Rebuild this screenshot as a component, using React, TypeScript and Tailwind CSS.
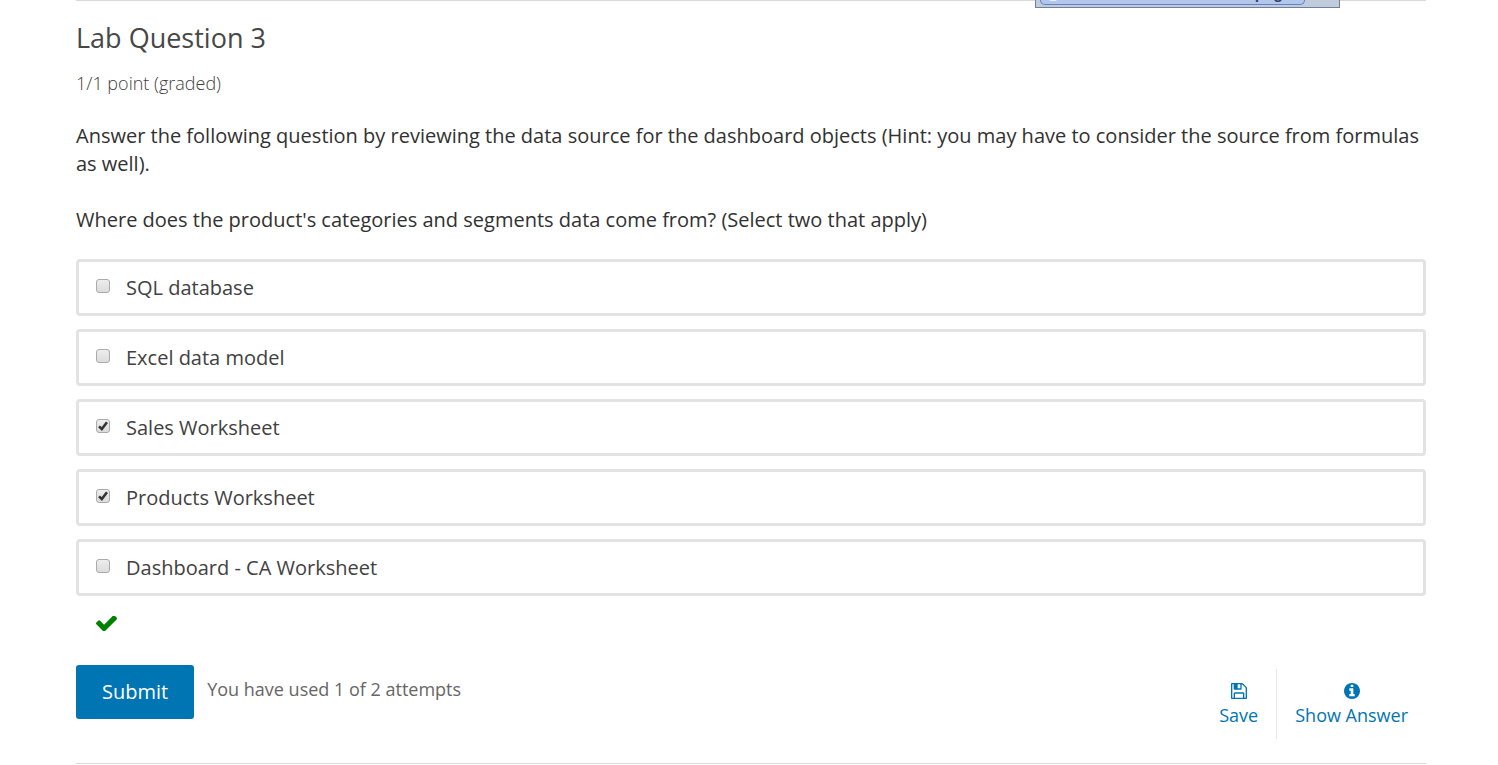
import { useState } from "react";

const choices = [
  { id: "sql", label: "SQL database", selected: false },
  { id: "model", label: "Excel data model", selected: false },
  { id: "sales", label: "Sales Worksheet", selected: true },
  { id: "products", label: "Products Worksheet", selected: true },
  { id: "dashboard", label: "Dashboard - CA Worksheet", selected: false },
];

function CheckIcon({ className }: { className: string }) {
  return (
    <svg viewBox="121 378 1550 1144" className={className} fill="currentColor" aria-hidden="true">
      <path d="M1671 566q0 40-28 68l-724 724-136 136q-28 28-68 28t-68-28l-136-136-362-362q-28-28-28-68t28-68l136-136q28-28 68-28t68 28l294 295 656-657q28-28 68-28t68 28l136 136q28 28 28 68z" />
    </svg>
  );
}

function TickIcon({ className }: { className: string }) {
  return (
    <svg viewBox="0 0 10 10" className={className} fill="none" stroke="currentColor" strokeWidth="2.6" aria-hidden="true">
      <path d="M1 5.4 3.8 8 9 1.2" />
    </svg>
  );
}

function SaveIcon() {
  return (
    <svg viewBox="0 128 1536 1536" className="size-4" fill="currentColor" aria-hidden="true">
      <path d="M384 1536h768v-384H384v384zm896 0h128V640q0-14-10-38.5t-20-34.5l-281-281q-10-10-34-20t-39-10v416q0 40-28 68t-68 28H352q-40 0-68-28t-28-68V256H128v1280h128v-416q0-40 28-68t68-28h832q40 0 68 28t28 68v416zM896 608V288q0-13-9.5-22.5T864 256H672q-13 0-22.5 9.5T640 288v320q0 13 9.5 22.5T672 640h192q13 0 22.5-9.5T896 608zm640 32v928q0 40-28 68t-68 28H96q-40 0-68-28t-28-68V224q0-40 28-68t68-28h928q40 0 88 20t76 48l280 280q28 28 48 76t20 88z" />
    </svg>
  );
}

function InfoIcon() {
  return (
    <svg viewBox="0 128 1536 1536" className="size-4" fill="currentColor" aria-hidden="true">
      <path d="M1024 1376v-160q0-14-9-23t-23-9h-96V672q0-14-9-23t-23-9H544q-14 0-23 9t-9 23v160q0 14 9 23t23 9h96v320h-96q-14 0-23 9t-9 23v160q0 14 9 23t23 9h448q14 0 23-9t9-23zM896 480V320q0-14-9-23t-23-9H672q-14 0-23 9t-9 23v160q0 14 9 23t23 9h192q14 0 23-9t9-23zm640 416q0 209-103 385.5T1153.5 1561 768 1664t-385.5-103T103 1281.5 0 896t103-385.5T382.5 231 768 128t385.5 103T1433 510.5 1536 896z" />
    </svg>
  );
}

function Choice({ id, label, selected }: { id: string; label: string; selected: boolean }) {
  const [checked, setChecked] = useState(selected);
  return (
    <label
      htmlFor={id}
      className="flex items-center gap-4 rounded-[4px] border-[3px] border-[#e3e3e3] px-[17px] py-3 text-xl leading-[27px] text-[#414141]"
    >
      <span className="mb-1 grid place-items-center">
        <input
          id={id}
          type="checkbox"
          checked={checked}
          onChange={() => setChecked(!checked)}
          className="col-start-1 row-start-1 size-[14px] appearance-none rounded-[3px] border border-[#ababab] bg-linear-to-b from-[#ededed] to-[#dcdcdc]"
        />
        {checked && <TickIcon className="pointer-events-none col-start-1 row-start-1 w-[10px] text-[#333333]" />}
      </span>
      {label}
    </label>
  );
}

export default function App() {
  return (
    <main className="bg-white pr-[72px] pl-[76px] font-['Open_Sans',sans-serif]">
      <section className="relative border-y border-[#d9d9d9]">
        <div className="absolute -top-px right-[86px] h-2 w-[305px] overflow-hidden border border-t-0 border-[#70809a] bg-[#c0cbdc] pl-1">
          <div className="flex h-[5px] w-[265px] items-end justify-between rounded-b-[6px] border border-t-0 border-[#6a80bd] bg-[#b1c8ec] pr-3 pl-2">
            <span className="mb-[3px] h-[2px] w-2 rounded-b-full bg-[#e8f1fc]" />
            <span className="font-['Liberation_Sans',sans-serif] text-base leading-5 font-bold text-[#33466b]">page</span>
          </div>
        </div>

        <h3 className="pt-[19px] text-[27px] leading-9 text-[#474747]">Lab Question 3</h3>
        <p className="pt-[13px] text-lg leading-7 font-light text-[#3f3f3f]">1/1 point (graded)</p>

        <div className="flex flex-col gap-7 pt-[25px] text-xl leading-7 text-[#313131]">
          <p>
            Answer the following question by reviewing the data source for the dashboard objects (Hint: you may have
            to consider the source from formulas as well).
          </p>
          <p>Where does the product's categories and segments data come from? (Select two that apply)</p>
        </div>

        <div className="flex flex-col gap-[13px] pt-[25px]">
          {choices.map((choice) => (
            <Choice key={choice.id} {...choice} />
          ))}
        </div>

        <div className="px-5 pt-5">
          <CheckIcon className="w-[21px] text-[#008100]" />
        </div>

        <div className="flex items-start justify-between pt-[34px] pb-6">
          <div className="flex items-start gap-[13px]">
            <button type="button" className="rounded-[3px] bg-[#0075b4] px-[26px] py-[13px] text-xl leading-7 font-medium text-white">
              Submit
            </button>
            <p className="pt-[10px] text-lg leading-7 text-[#666666]">You have used 1 of 2 attempts</p>
          </div>
          <div className="mt-1 flex text-lg leading-6 text-[#0075b4]">
            <button type="button" className="flex flex-col items-center px-[18px] pt-[14px] pb-3">
              <SaveIcon />
              <span className="pt-1">Save</span>
            </button>
            <button type="button" className="flex flex-col items-center border-l border-[#e8e8e8] px-[18px] pt-[14px] pb-3">
              <InfoIcon />
              <span className="pt-1">Show Answer</span>
            </button>
          </div>
        </div>
      </section>
    </main>
  );
}
